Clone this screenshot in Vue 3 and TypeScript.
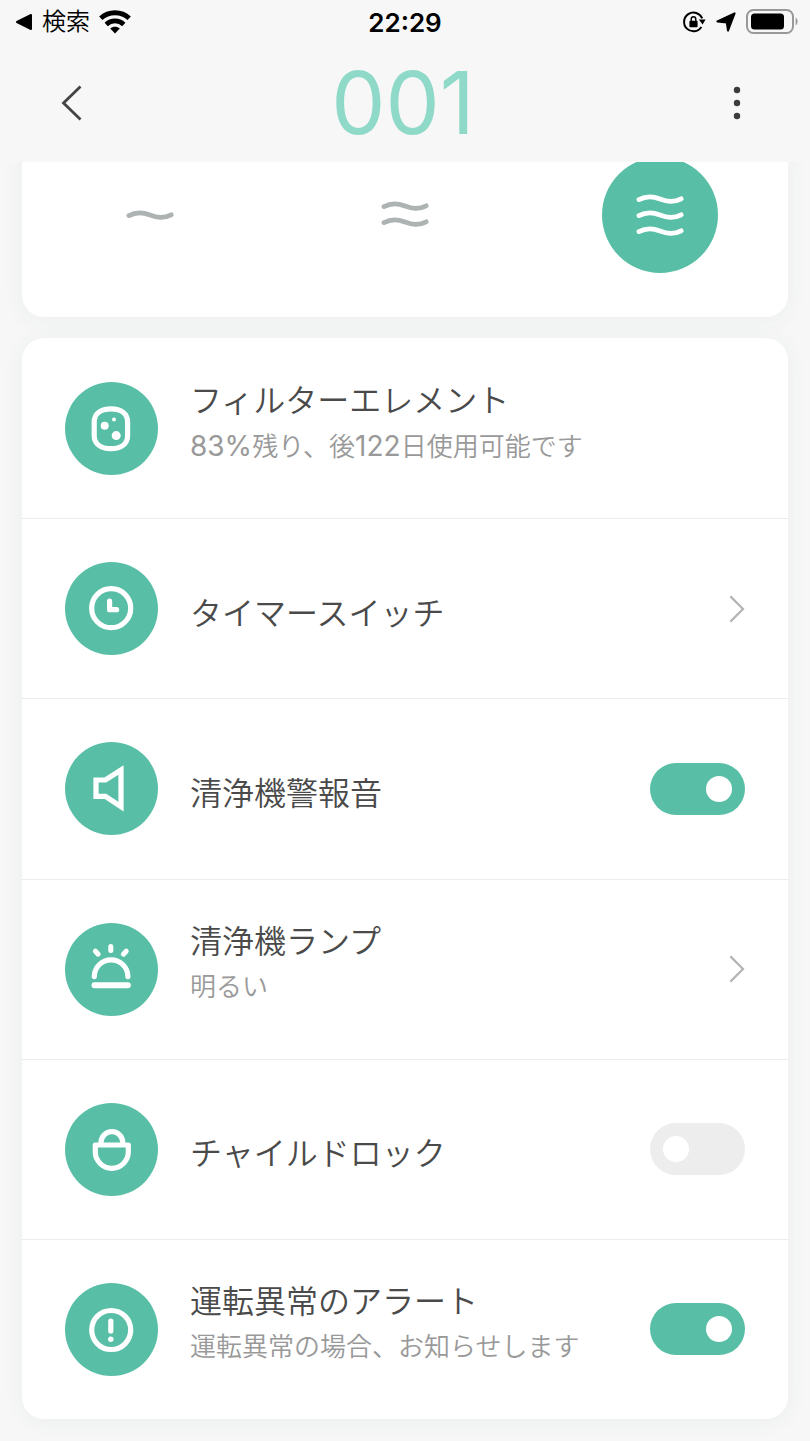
<script setup lang="ts">
import { ref } from 'vue'

type RowKind = 'info' | 'link' | 'toggle'
type IconName = 'filter' | 'clock' | 'speaker' | 'lamp' | 'lock' | 'alert'

interface SettingRow {
  icon: IconName
  kind: RowKind
  title: string
  note?: string
  on?: boolean
}

const speeds = [
  { label: '弱', waves: [30] },
  { label: '中', waves: [21, 37] },
  { label: '強', waves: [14, 30, 46] },
]
const activeSpeed = ref(2)

const rows = ref<SettingRow[]>([
  { icon: 'filter', kind: 'info', title: 'フィルターエレメント', note: '83%残り、後122日使用可能です' },
  { icon: 'clock', kind: 'link', title: 'タイマースイッチ' },
  { icon: 'speaker', kind: 'toggle', title: '清浄機警報音', on: true },
  { icon: 'lamp', kind: 'link', title: '清浄機ランプ', note: '明るい' },
  { icon: 'lock', kind: 'toggle', title: 'チャイルドロック', on: false },
  { icon: 'alert', kind: 'toggle', title: '運転異常のアラート', note: '運転異常の場合、お知らせします', on: true },
])

const tags: Record<RowKind, string> = { info: 'div', link: 'button', toggle: 'label' }

// Numbers are set in a heavier, larger face than the kana and kanji around them.
const splitNumbers = (text: string) => text.split(/([0-9%]+)/).filter(Boolean)
const isNumber = (part: string) => /^[0-9%]+$/.test(part)
</script>

<template>
  <div class="screen">
    <div class="status">
      <a class="status-back" href="#">
        <svg width="18" height="18" viewBox="0 0 18 18" aria-hidden="true">
          <path d="M2 9 16 2V16Z" fill="#000" stroke="#000" stroke-width="2" stroke-linejoin="round" />
        </svg>
        <span>検索</span>
        <svg width="32" height="24" viewBox="0 0 32 24" aria-hidden="true">
          <g fill="none" stroke="#000" stroke-width="4.8">
            <path d="M1.8 8.2C9.6 .9 22.4 .9 30.2 8.2" />
            <path d="M7.2 14.4C12.2 9.8 19.8 9.8 24.8 14.4" />
          </g>
          <path d="M11.2 18.6C14 16 18 16 20.8 18.6L16 23.6Z" />
        </svg>
      </a>
      <time class="clock">22:29</time>
      <div class="status-icons">
        <svg width="24" height="24" viewBox="0 0 24 24" aria-hidden="true">
          <path d="M20.2 8.4A9.4 9.4 0 1 0 19.4 17" fill="none" stroke="#000" stroke-width="2" />
          <path d="M16.8 9.6H23.6L20.6 14.4Z" />
          <path d="M9.2 11.5V9.4A2.3 2.6 0 0 1 13.8 9.4V11.5" fill="none" stroke="#000" stroke-width="1.4" />
          <rect x="7.4" y="10.8" width="8.2" height="6.4" rx="1" />
        </svg>
        <svg width="20" height="20" viewBox="0 0 20 20" aria-hidden="true">
          <path d="M18.6 1.4 12 18.6 10.8 10.6 1.4 9.4Z" stroke="#000" stroke-width="2" stroke-linejoin="round" />
        </svg>
        <svg width="52" height="26" viewBox="0 0 52 26" aria-hidden="true">
          <rect x="1" y="1" width="46" height="23" rx="6.5" fill="none" stroke="#999" stroke-width="2" />
          <rect x="5" y="4.6" width="33" height="16" rx="3.5" />
          <path d="M49.6 8.5C52.2 10 52.2 15 49.6 16.5Z" fill="#999" />
        </svg>
      </div>
    </div>

    <header class="bar">
      <button class="bar-button" type="button" aria-label="戻る">
        <svg width="36" height="40" viewBox="0 0 36 40" aria-hidden="true">
          <path d="M28.5 3.5 11.5 20 28.5 36.5" fill="none" stroke="#444" stroke-width="2.8" />
        </svg>
      </button>
      <h1>001</h1>
      <button class="bar-button" type="button" aria-label="メニュー">
        <svg width="36" height="40" viewBox="0 0 36 40" aria-hidden="true">
          <g fill="#3c3c3c">
            <circle cx="19" cy="7" r="3.2" />
            <circle cx="19" cy="20" r="3.2" />
            <circle cx="19" cy="33" r="3.2" />
          </g>
        </svg>
      </button>
    </header>

    <main class="content">
      <section class="card speeds">
        <button
          v-for="(speed, i) in speeds"
          :key="speed.label"
          type="button"
          class="speed"
          :class="{ active: i === activeSpeed }"
          :aria-label="speed.label"
          :aria-pressed="i === activeSpeed"
          @click="activeSpeed = i"
        >
          <svg width="60" height="60" viewBox="0 0 60 60" aria-hidden="true">
            <path
              v-for="y in speed.waves"
              :key="y"
              :d="`M9 ${y + 0.6}C17 ${y - 3.6} 23 ${y - 2.6} 30 ${y}S43 ${y + 4} 51.2 ${y - 0.2}`"
              fill="none"
              stroke="currentColor"
              stroke-width="4.8"
              stroke-linecap="round"
            />
          </svg>
        </button>
      </section>

      <section class="card list">
        <component
          :is="tags[row.kind]"
          v-for="row in rows"
          :key="row.icon"
          class="row"
          :type="row.kind === 'link' ? 'button' : undefined"
        >
          <svg class="badge" viewBox="0 0 93 93" aria-hidden="true">
            <circle cx="46.5" cy="46.5" r="46.5" fill="#58bfa6" />
            <g fill="none" stroke="#fff" stroke-width="5.2" stroke-linecap="round" stroke-linejoin="round">
              <template v-if="row.icon === 'filter'">
                <path d="M46 26.8C56 26.8 62.6 31.5 62.6 40V53.4C62.6 62 56 66.6 46 66.6S29.2 62 29.2 53.4V40C29.2 31.5 36 26.8 46 26.8Z" />
                <g fill="#fff" stroke="none">
                  <circle cx="39.7" cy="43.8" r="4" />
                  <circle cx="49" cy="37.4" r="2" />
                  <circle cx="51.2" cy="53.6" r="4.5" />
                </g>
              </template>
              <template v-else-if="row.icon === 'clock'">
                <circle cx="46.2" cy="46.2" r="19.5" />
                <path d="M44.6 39.2V47.7H51.6" />
              </template>
              <path v-else-if="row.icon === 'speaker'" d="M31 38H40.4L56 28V64.6L40.4 54.4H31Z" stroke-linejoin="miter" stroke-miterlimit="3.2" />
              <template v-else-if="row.icon === 'lamp'">
                <path d="M29.3 53.6A16.8 16.8 0 0 1 62.9 53.6" />
                <path d="M29.5 62.3H62.8" stroke-width="6" />
                <path d="M45.8 23.6V27.4M30.4 28.2 33.2 31.2M61.2 28.2 58.4 31.2" stroke-width="5" />
              </template>
              <path v-else-if="row.icon === 'lock'" d="M30.3 42H63.3V48.8A16.5 16.5 0 0 1 30.3 48.8ZM36 42V39.5A10.9 10.9 0 0 1 57.8 39.5V42" />
              <template v-else>
                <circle cx="46.2" cy="47" r="19.5" />
                <path d="M45.8 38V48" />
                <circle cx="45.8" cy="56.3" r="2.7" fill="#fff" stroke="none" />
              </template>
            </g>
          </svg>

          <span class="text" :class="{ double: row.note }">
            <span class="title">{{ row.title }}</span>
            <span v-if="row.note" class="note">
              <span v-for="(part, i) in splitNumbers(row.note)" :key="i" :class="{ number: isNumber(part) }">{{ part }}</span>
            </span>
          </span>

          <svg v-if="row.kind === 'link'" width="16" height="28" viewBox="0 0 16 28" aria-hidden="true">
            <path d="M1.4 1.4 14 14 1.4 26.6" fill="none" stroke="#b4b4b4" stroke-width="2.2" />
          </svg>
          <input v-else-if="row.kind === 'toggle'" v-model="row.on" class="switch" type="checkbox" role="switch" />
        </component>
      </section>
    </main>
  </div>
</template>

<style>
body {
  margin: 0;
  background: #f7f7f7;
}
</style>

<style scoped>
.screen {
  display: flex;
  flex-direction: column;
  min-height: 100vh;
  background: #f7f7f7;
  color: #4a4a4a;
  font-family: Inter, "Noto Sans CJK JP", sans-serif;
}

button {
  margin: 0;
  padding: 0;
  border: 0;
  background: none;
  color: inherit;
  font: inherit;
  text-align: left;
  cursor: pointer;
}

svg {
  display: block;
  flex: none;
}

.status {
  display: grid;
  grid-template-columns: 1fr auto 1fr;
  align-items: center;
  height: 44px;
  padding: 0 12px;
  color: #000;
}

.status-back {
  display: flex;
  align-items: center;
  gap: 9px;
  padding-left: 3px;
  color: inherit;
  font-size: 24px;
  font-weight: 350;
  line-height: 32px;
  text-decoration: none;
}

.clock {
  font-size: 26px;
  font-weight: 600;
}

.status-icons {
  display: flex;
  align-items: center;
  justify-content: flex-end;
  gap: 10px;
}

.bar {
  display: flex;
  align-items: center;
  justify-content: space-between;
  height: 118px;
  padding: 0 56px 0 52px;
}

h1 {
  margin: 0;
  color: #8fd9c8;
  font-size: 86px;
  font-weight: 400;
  line-height: 100px;
}

.content {
  display: flex;
  flex: 1;
  flex-direction: column;
  gap: 21px;
  padding: 0 22px 22px;
  overflow: hidden;
}

.card {
  border-radius: 22px;
  background: #fff;
  box-shadow: 0 2px 22px rgba(50, 90, 80, 0.06);
}

.speeds {
  display: grid;
  grid-template-columns: repeat(3, 1fr);
  justify-items: center;
  margin-top: -22px;
  padding: 17px 0 44px;
}

.speed {
  display: flex;
  align-items: center;
  justify-content: center;
  width: 116px;
  height: 116px;
  border-radius: 50%;
  color: #adb3b3;
}

.speed.active {
  background: #58bfa6;
  color: #fff;
}

.list {
  display: grid;
  flex: 1;
  grid-auto-rows: 1fr;
}

.row {
  display: flex;
  align-items: center;
  gap: 32px;
  box-sizing: border-box;
  width: 100%;
  min-height: 160px;
  padding: 0 43px;
}

.row + .row {
  border-top: 1px solid #ececec;
}

.badge {
  width: 93px;
  height: 93px;
}

.text {
  display: flex;
  flex: 1;
  flex-direction: column;
  padding-top: 10px;
  font-weight: 350;
}

.text.double {
  padding: 0 0 12px;
}

.title {
  font-size: 32px;
  line-height: 48px;
}

.note {
  height: 42px;
  color: #999;
  font-size: 26px;
  line-height: 42px;
}

.number {
  font-size: 28px;
  font-weight: 400;
}

.switch {
  display: flex;
  align-items: center;
  flex: none;
  box-sizing: border-box;
  width: 95px;
  height: 52px;
  margin: 0;
  padding: 0 13px;
  border-radius: 26px;
  background: #ededed;
  appearance: none;
  cursor: pointer;
}

.switch::before {
  width: 26px;
  height: 26px;
  border-radius: 50%;
  background: #fff;
  content: "";
}

.switch:checked {
  justify-content: flex-end;
  background: #58bfa6;
}
</style>
